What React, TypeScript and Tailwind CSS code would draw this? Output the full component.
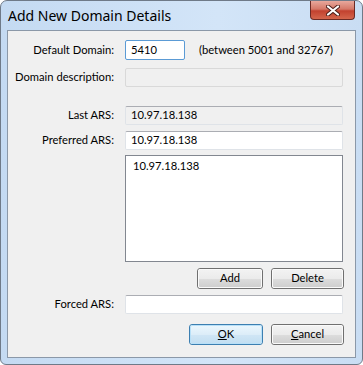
import React from "react";

const font = { fontFamily: '"Lato", "Noto Sans", sans-serif' };
const titleFont = { fontFamily: '"Noto Sans", "Open Sans", sans-serif' };

function Field({ value, kind }: { value?: string; kind: "focus" | "normal" | "disabled" | "readonly" }) {
  const cls =
    kind === "focus"
      ? "border-[#5b9bd5] bg-white"
      : kind === "normal"
      ? "border-[#dfe3e8] border-t-[#abadb3] bg-white"
      : kind === "readonly"
      ? "border-[#dfe3e8] border-t-[#abadb3] bg-[#f0f0f0]"
      : "border-[#d9d9d9] bg-[#f0f0f0]";
  return (
    <div className={`h-full w-full border rounded-[2px] pl-[5px] flex items-center text-[11.2px] text-black whitespace-nowrap ${cls}`}>
      {value}
    </div>
  );
}

function Row({ label, children, className }: { label: string; children: React.ReactNode; className: string }) {
  return (
    <div className={`flex items-center ${className}`}>
      <div className="w-[107px] shrink-0 text-right text-[11.2px] text-black pr-[1px] whitespace-nowrap">{label}</div>
      <div className="ml-[10px] h-full flex items-center shrink-0">{children}</div>
    </div>
  );
}

function Btn({ children, w, def }: { children: React.ReactNode; w: string; def?: boolean }) {
  return (
    <div className={`h-[21px] ${w} shrink-0 rounded-[3px] border ${def ? "border-[#3c7fb1]" : "border-[#707070]"}`}>
      <div
        className={`h-full w-full rounded-[2px] flex items-center justify-center text-[11.2px] text-black ${
          def
            ? "bg-[linear-gradient(to_bottom,#eaf6fd_0%,#dcedf8_50%,#d0e6f5_51%,#c3dff2_100%)] border border-[#b8e0f8]"
            : "bg-[linear-gradient(to_bottom,#f2f2f2_0%,#ebebeb_50%,#dddddd_51%,#cfcfcf_100%)] border border-[#fafafa]"
        }`}
      >
        {children}
      </div>
    </div>
  );
}

export default function App() {
  return (
    <div className="w-[363px] h-[365px] bg-white" style={font}>
      <div className="w-[363px] h-[365px] rounded-t-[7px] rounded-b-[6px] border border-[#6f7a88] bg-[linear-gradient(to_right,#c4daf2,#d3e5f8_60%,#c9ddf3)] flex flex-col relative">
        <div className="h-[29px] flex items-center pl-[7px] text-[14px] text-black" style={titleFont}>
          Add New Domain Details
        </div>
        <div className="absolute right-[7px] top-0 w-[45px] h-[19px] rounded-b-[4px] border border-t-0 border-[#6b2a24] bg-[linear-gradient(to_bottom,#e8a89c_0%,#d57868_45%,#c2412f_55%,#d4664c_100%)] flex items-center justify-center">
          <svg width="14" height="11" viewBox="0 0 14 11">
            <path d="M2 1.5 L12 9.5 M12 1.5 L2 9.5" stroke="#4a1d18" strokeWidth="4" strokeLinecap="round" />
            <path d="M2 1.5 L12 9.5 M12 1.5 L2 9.5" stroke="#ffffff" strokeWidth="2.2" strokeLinecap="round" />
          </svg>
        </div>
        <div className="mx-[6px] h-[328px] border border-[#8b98a8] bg-[#f0f0f0] flex flex-col pr-[11px]">
          <Row label="Default Domain:" className="h-[20px] mt-[9px]">
            <div className="w-[60px] h-[20px]">
              <Field kind="focus" value="5410" />
            </div>
            <div className="ml-[14px] text-[11.2px] text-black whitespace-nowrap">(between 5001 and 32767)</div>
          </Row>
          <Row label="Domain description:" className="h-[19px] mt-[8px]">
            <div className="w-[218px] h-[19px]">
              <Field kind="disabled" />
            </div>
          </Row>
          <Row label="Last ARS:" className="h-[19px] mt-[19px]">
            <div className="w-[218px] h-[19px]">
              <Field kind="readonly" value="10.97.18.138" />
            </div>
          </Row>
          <Row label="Preferred ARS:" className="h-[19px] mt-[6px]">
            <div className="w-[218px] h-[19px]">
              <Field kind="normal" value="10.97.18.138" />
            </div>
          </Row>
          <div className="ml-[117px] mt-[5px] w-[218px] h-[107px] border border-[#828790] bg-white">
            <div className="pl-[7px] pt-[1px] text-[11.2px] text-black leading-[17px]">10.97.18.138</div>
          </div>
          <div className="flex justify-end gap-[8px] mt-[6px]">
            <Btn w="w-[66px]">Add</Btn>
            <Btn w="w-[73px]">Delete</Btn>
          </div>
          <Row label="Forced ARS:" className="h-[19px] mt-[6px]">
            <div className="w-[218px] h-[19px]">
              <Field kind="normal" />
            </div>
          </Row>
          <div className="flex justify-end gap-[8px] mt-[10px]">
            <Btn w="w-[74px]" def>
              <span className="underline">O</span>K
            </Btn>
            <Btn w="w-[73px]">
              <span className="underline">C</span>ancel
            </Btn>
          </div>
        </div>
      </div>
    </div>
  );
}
